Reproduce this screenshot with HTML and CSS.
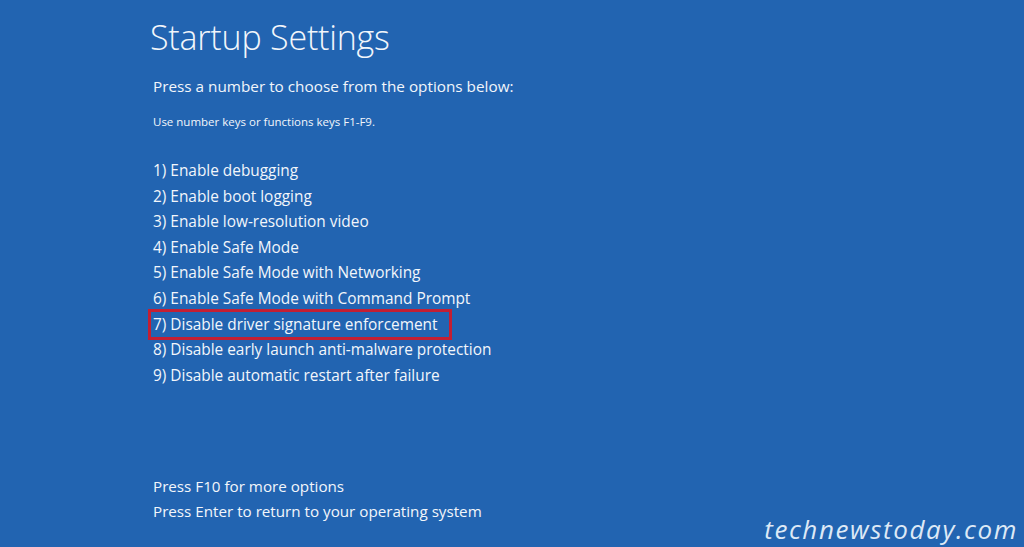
FILE: index.html
```html
<!DOCTYPE html>
<html>
<head>
<meta charset="utf-8">
<link rel="stylesheet" href="styles.css">
</head>
<body>
<main class="screen">
  <h1 class="title">Startup Settings</h1>
  <p class="lead">Press a number to choose from the options below:</p>
  <p class="hint">Use number keys or functions keys F1-F9.</p>
  <ul class="options">
    <li>1) Enable debugging</li>
    <li>2) Enable boot logging</li>
    <li>3) Enable low-resolution video</li>
    <li>4) Enable Safe Mode</li>
    <li>5) Enable Safe Mode with Networking</li>
    <li>6) Enable Safe Mode with Command Prompt</li>
    <li class="marked">7) Disable driver signature enforcement</li>
    <li>8) Disable early launch anti-malware protection</li>
    <li>9) Disable automatic restart after failure</li>
  </ul>
  <div class="footer">
    <p>Press F10 for more options</p>
    <p>Press Enter to return to your operating system</p>
  </div>
  <div class="watermark">technewstoday.com</div>
</main>
</body>
</html>
```
FILE: styles.css
```css
html, body {
  margin: 0;
  padding: 0;
}
body {
  background: #2264b1;
  width: 1024px;
  height: 547px;
  overflow: hidden;
}
.screen {
  position: relative;
  width: 1024px;
  height: 547px;
  padding-left: 153px;
  box-sizing: border-box;
  color: #f2f6fb;
  font-family: "Open Sans", "Noto Sans", sans-serif;
}
.title {
  margin: 0;
  padding-top: 14px;
  margin-left: -3px;
  font-size: 34px;
  font-weight: 300;
  line-height: 46px;
  letter-spacing: -0.2px;
}
.lead {
  margin: 15px 0 0;
  font-size: 15.3px;
  line-height: 22px;
}
.hint {
  margin: 16px 0 0;
  font-size: 11.5px;
  line-height: 17px;
}
.options {
  list-style: none;
  margin: 28px 0 0;
  padding: 0;
  font-size: 15.4px;
  line-height: 25.6px;
}
.options li {
  width: max-content;
}
.options .marked {
  outline: 3px solid #c41f33;
  outline-offset: 0;
  margin-left: -2px;
  padding: 0 11px 0 2px;
}
.footer {
  margin-top: 86px;
  font-size: 15.2px;
  line-height: 25px;
}
.footer p {
  margin: 0;
}
.watermark {
  position: absolute;
  right: 6px;
  bottom: 0;
  font-size: 26px;
  font-style: italic;
  font-weight: 500;
  color: #dde9f6;
  letter-spacing: 1.6px;
}
```
